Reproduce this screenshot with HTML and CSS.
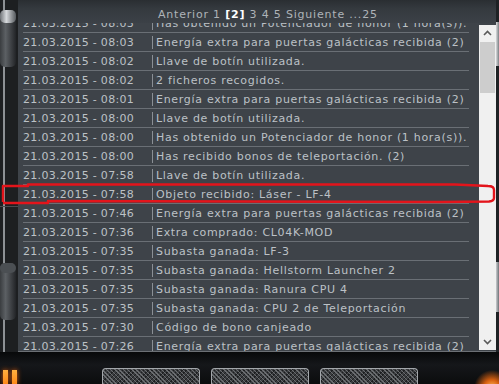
FILE: index.html
```html
<!DOCTYPE html>
<html lang="es">

<head>
    <meta charset="UTF-8" />
    <title>Registro</title>
    <link rel="stylesheet" href="styles.css">
</head>

<body>
    <div class="screen">
        <div class="main">
            <div class="deco-left">
                <svg width="18" height="352" viewBox="0 0 18 352">
                    <defs>
                        <linearGradient id="cap" x1="0" x2="1" y1="0" y2="0">
                            <stop offset="0" stop-color="#3a3d40" />
                            <stop offset="0.35" stop-color="#5c6064" />
                            <stop offset="1" stop-color="#222427" />
                        </linearGradient>
                        <linearGradient id="top" x1="0" x2="1" y1="0" y2="0">
                            <stop offset="0" stop-color="#707478" />
                            <stop offset="0.4" stop-color="#d6d9dc" />
                            <stop offset="1" stop-color="#55595d" />
                        </linearGradient>
                    </defs>
                    <rect x="0" y="0" width="18" height="352" fill="#1d1f21" />
                    <rect x="3" y="0" width="2" height="352" fill="#8d9195" />
                    <rect x="0" y="10" width="16" height="57" rx="5" fill="url(#cap)" />
                    <rect x="0" y="10" width="16" height="13" rx="5" fill="url(#top)" />
                    <rect x="0" y="206" width="18" height="1" fill="#4a4d50" />
                    <rect x="0" y="263" width="16" height="57" rx="5" fill="url(#cap)" />
                    <rect x="0" y="263" width="16" height="10" rx="5" fill="#4b4f53" />
                </svg>
            </div>
            <div class="panel">
                <div class="pager">Anterior 1 <b>[2]</b> 3 4 5 Siguiente ...25</div>
                <div class="body">
                    <div class="rows">
                        <div class="list">
                            <div class="row"><span class="date">21.03.2015 - 08:03</span><span class="sep"></span><span class="msg">Has obtenido un Potenciador de honor (1 hora(s)).</span></div>
                            <div class="row"><span class="date">21.03.2015 - 08:03</span><span class="sep"></span><span class="msg">Energía extra para puertas galácticas recibida (2)</span></div>
                            <div class="row"><span class="date">21.03.2015 - 08:02</span><span class="sep"></span><span class="msg">Llave de botín utilizada.</span></div>
                            <div class="row"><span class="date">21.03.2015 - 08:02</span><span class="sep"></span><span class="msg">2 ficheros recogidos.</span></div>
                            <div class="row"><span class="date">21.03.2015 - 08:01</span><span class="sep"></span><span class="msg">Energía extra para puertas galácticas recibida (2)</span></div>
                            <div class="row"><span class="date">21.03.2015 - 08:00</span><span class="sep"></span><span class="msg">Llave de botín utilizada.</span></div>
                            <div class="row"><span class="date">21.03.2015 - 08:00</span><span class="sep"></span><span class="msg">Has obtenido un Potenciador de honor (1 hora(s)).</span></div>
                            <div class="row"><span class="date">21.03.2015 - 08:00</span><span class="sep"></span><span class="msg">Has recibido bonos de teleportación. (2)</span></div>
                            <div class="row"><span class="date">21.03.2015 - 07:58</span><span class="sep"></span><span class="msg">Llave de botín utilizada.</span></div>
                            <div class="row"><span class="date">21.03.2015 - 07:58</span><span class="sep"></span><span class="msg">Objeto recibido: Láser - LF-4</span></div>
                            <div class="row"><span class="date">21.03.2015 - 07:46</span><span class="sep"></span><span class="msg">Energía extra para puertas galácticas recibida (2)</span></div>
                            <div class="row"><span class="date">21.03.2015 - 07:36</span><span class="sep"></span><span class="msg">Extra comprado: CL04K-MOD</span></div>
                            <div class="row"><span class="date">21.03.2015 - 07:35</span><span class="sep"></span><span class="msg">Subasta ganada: LF-3</span></div>
                            <div class="row"><span class="date">21.03.2015 - 07:35</span><span class="sep"></span><span class="msg">Subasta ganada: Hellstorm Launcher 2</span></div>
                            <div class="row"><span class="date">21.03.2015 - 07:35</span><span class="sep"></span><span class="msg">Subasta ganada: Ranura CPU 4</span></div>
                            <div class="row"><span class="date">21.03.2015 - 07:35</span><span class="sep"></span><span class="msg">Subasta ganada: CPU 2 de Teleportación</span></div>
                            <div class="row"><span class="date">21.03.2015 - 07:30</span><span class="sep"></span><span class="msg">Código de bono canjeado</span></div>
                            <div class="row"><span class="date">21.03.2015 - 07:26</span><span class="sep"></span><span class="msg">Energía extra para puertas galácticas recibida (2)</span></div>
                        </div>
                    </div>
                    <div class="scroll">
                        <div class="arrow">
                            <svg width="9" height="6" viewBox="0 0 9 6"><path d="M1 5 L4.5 1.5 L8 5" fill="none" stroke="#5a5a5a" stroke-width="1.6" /></svg>
                        </div>
                        <div class="track">
                            <div class="thumb"></div>
                        </div>
                        <div class="arrow">
                            <svg width="9" height="6" viewBox="0 0 9 6"><path d="M1 1 L4.5 4.5 L8 1" fill="none" stroke="#5a5a5a" stroke-width="1.6" /></svg>
                        </div>
                    </div>
                </div>
            </div>
            <div class="edge-right">
                <div class="edge-a"></div>
                <div class="edge-b"></div>
            </div>
        </div>
        <div class="bottom">
            <div class="glow">
                <span class="bar"></span>
                <span class="bar"></span>
            </div>
            <div class="btns">
                <div class="btn"></div>
                <div class="btn"></div>
                <div class="btn"></div>
            </div>
        </div>
    </div>

    <svg class="mark" width="499" height="384" viewBox="0 0 499 384">
        <path d="M3 202 L3 186 L28 186 L28 184.5 L455 184.5 L488 186 Q494 186 494 190 L494 198 Q494 201 489 201.5 L440 202 L48 201 L48 203 L3 203"
            fill="none" stroke="#e3141b" stroke-width="2.4" stroke-linejoin="round" />
    </svg>
</body>

</html>
```

FILE: styles.css
```css
* {
    margin: 0;
    padding: 0;
    box-sizing: border-box;
}

body {
    width: 499px;
    height: 384px;
    overflow: hidden;
    background-color: #0c0d0e;
    font-family: "DejaVu Sans", Verdana, sans-serif;
    font-size: 11px;
    position: relative;
}

.screen {
    display: flex;
    flex-direction: column;
    height: 384px;
}

.main {
    display: flex;
    height: 352px;
}

.deco-left {
    width: 18px;
    display: flex;
}

.panel {
    width: 478px;
    display: flex;
    flex-direction: column;
    background-color: #3e4349;
    border-bottom: 1px solid #6c7075;
}

.pager {
    height: 23px;
    padding-left: 140px;
    padding-top: 8px;
    color: #aeb3b8;
    letter-spacing: 0.8px;
    white-space: nowrap;
    background: linear-gradient(#2a2e32, #353a3f 40%, #3c4147);
}

.pager b {
    color: #ffffff;
}

.body {
    display: flex;
    height: 328px;
    padding-left: 5px;
    gap: 10px;
}

.rows {
    width: 446px;
    height: 328px;
    overflow: hidden;
}

.list {
    margin-top: -9px;
}

.row {
    height: 19px;
    display: flex;
    align-items: center;
    border-bottom: 1px solid #6a6f75;
    color: #bcc1c6;
    white-space: nowrap;
}

.date {
    width: 129px;
    letter-spacing: 0.3px;
}

.sep {
    width: 1px;
    height: 13px;
    background-color: #8a8f95;
}

.msg {
    padding-left: 3px;
    letter-spacing: 0.7px;
}

.scroll {
    width: 17px;
    margin-top: 2px;
    margin-bottom: 1px;
    background-color: #f0f0f0;
    display: flex;
    flex-direction: column;
}

.arrow {
    height: 16px;
    display: flex;
    justify-content: center;
    align-items: center;
}

.track {
    flex: 1;
    padding: 1px 1px 0 1px;
}

.thumb {
    height: 51px;
    background-color: #cdcdcd;
}

.edge-right {
    width: 3px;
    background-color: #1e2124;
    display: flex;
    flex-direction: column;
}

.edge-a {
    height: 44px;
    margin-top: 22px;
    background: linear-gradient(90deg, #d8dadc, #7a7e82);
}

.edge-b {
    height: 50px;
    margin-top: 196px;
    background: linear-gradient(90deg, #c9cccf, #6d7175);
}

.bottom {
    height: 32px;
    display: flex;
    background:
        radial-gradient(ellipse 18px 18px at 492px 36px, #ffc060, #d86010 45%, rgba(120, 40, 0, 0) 100%),
        linear-gradient(#08090a, #15171a 40%, #0b0c0d);
}

.glow {
    width: 102px;
    display: flex;
    gap: 4px;
    padding-left: 3px;
    padding-top: 18px;
}

.bar {
    width: 5px;
    height: 14px;
    background: linear-gradient(#ffb040, #ff8a1a);
    box-shadow: 0 0 5px #e06010;
}

.btns {
    display: flex;
    gap: 11px;
    padding-top: 16px;
}

.btn {
    width: 98px;
    height: 20px;
    border: 1px solid #a3a7ab;
    border-bottom: none;
    border-radius: 4px 4px 0 0;
    background-color: #3a3c3f;
    background-image:
        repeating-linear-gradient(45deg, #6a6d70 0 1px, transparent 1px 3px),
        repeating-linear-gradient(-45deg, #1d1f21 0 1px, transparent 1px 3px);
}

.mark {
    position: absolute;
    left: 0;
    top: 0;
    pointer-events: none;
}
```
